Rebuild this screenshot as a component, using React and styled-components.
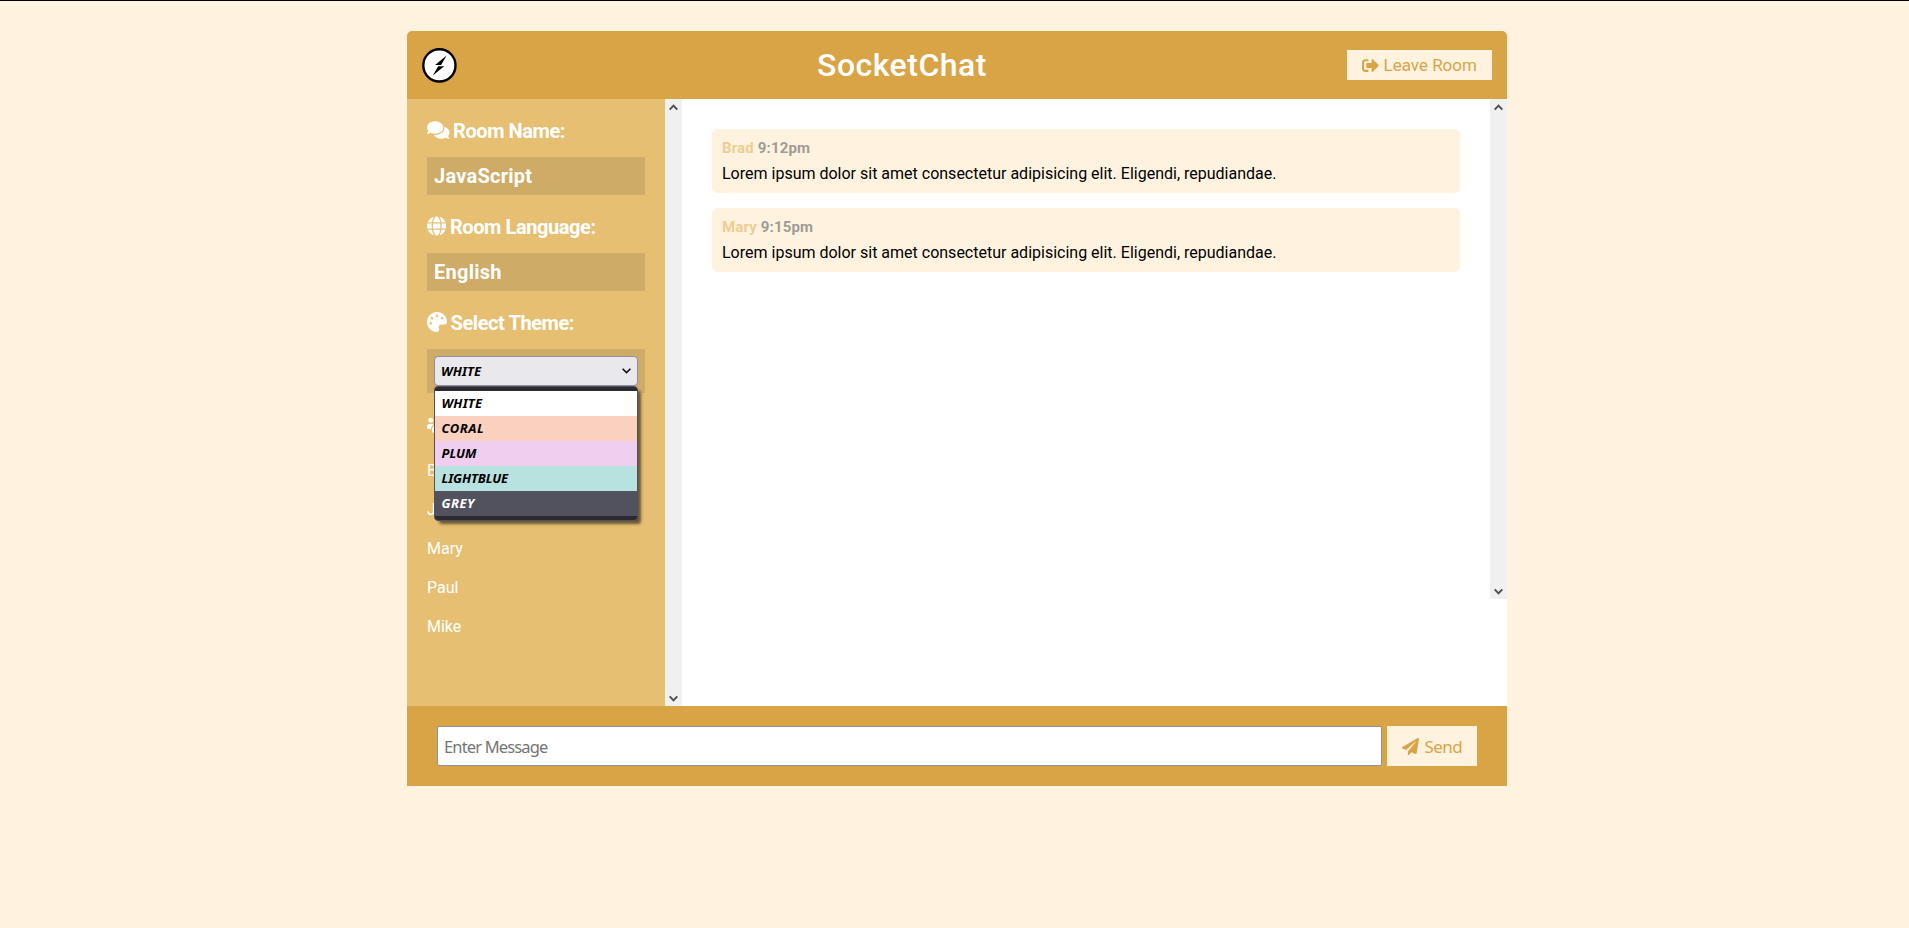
import React from "react";
import styled, { createGlobalStyle } from "styled-components";
import { FaComments, FaGlobe, FaPalette, FaUsers, FaSignOutAlt, FaPaperPlane } from "react-icons/fa";

const c = {
  dark: "#d9a446",
  light: "#e6bf72",
  cream: "#fff3e0",
};

const GlobalStyle = createGlobalStyle`
  *, *::before, *::after { box-sizing: border-box; }
  body {
    margin: 0;
    padding-left: 5px;
    min-height: 100vh;
    border-top: 1px solid #000;
    background: ${c.cream};
    font-family: Roboto, "Liberation Sans", sans-serif;
    font-size: 16px;
    color: #000;
  }
`;

const Container = styled.div`
  width: 1100px;
  margin: 30px auto 0;
`;

const Header = styled.header`
  display: flex;
  align-items: center;
  justify-content: space-between;
  height: 68px;
  padding: 0 15px;
  background: ${c.dark};
  border-radius: 5px 5px 0 0;
`;

const Logo = styled.svg`
  display: block;
  width: 35px;
  height: 35px;
`;

const Title = styled.h1`
  margin: 0;
  font-size: 32px;
  font-weight: 500;
  letter-spacing: 0.5px;
  line-height: 38px;
  color: #fff;
`;

const Button = styled.button`
  display: flex;
  align-items: center;
  gap: ${(p) => p.$gap || "4.5px"};
  width: ${(p) => p.$width};
  height: ${(p) => p.$height};
  flex: none;
  padding: 0 15px;
  border: 0;
  background: ${c.cream};
  color: ${c.dark};
  font-family: ${(p) => p.$font || "inherit"};
  font-size: 17px;
  letter-spacing: ${(p) => p.$spacing || "normal"};
  line-height: 20px;
  white-space: nowrap;

  svg { flex: none; }
`;

const Main = styled.main`
  display: grid;
  grid-template-columns: 275px 825px;
  height: 607px;
`;

const Sidebar = styled.aside`
  display: flex;
  background: ${c.light};
  color: #fff;
`;

const SidebarContent = styled.div`
  flex: 1;
  min-width: 0;
  padding: 20px 20px 60px;
`;

const Heading = styled.h3`
  display: flex;
  align-items: center;
  gap: 3.5px;
  height: 23.4px;
  margin: 0 0 15px;
  padding-top: 1px;
  font-size: 20px;
  font-weight: 700;
  letter-spacing: -0.42px;
  line-height: 22.4px;
  white-space: nowrap;

  svg {
    flex: none;
    width: ${(p) => p.$icon || "20px"};
    height: 20px;
    margin-bottom: 2.4px;
  }
`;

const Field = styled.div`
  margin-bottom: 20px;
  padding: 7px;
  background: rgba(0, 0, 0, 0.1);
`;

const TextField = styled(Field)`
  padding: 8px 7px 6px;
  font-size: 20px;
  font-weight: 700;
  letter-spacing: 0.25px;
  line-height: 23.4px;
`;

const SelectWrap = styled.div`
  position: relative;
  height: 30px;
  font: italic 700 13px/25px "Noto Sans", "DejaVu Sans", sans-serif;
  letter-spacing: 0.1px;
  color: #000;
`;

const SelectBox = styled.div`
  display: flex;
  align-items: center;
  justify-content: space-between;
  height: 30px;
  padding: 1px 6px 0;
  border: 1px solid #8f8f9d;
  border-radius: 4px;
  background: #e9e9ed;
`;

const Options = styled.ul`
  position: absolute;
  top: 30px;
  left: 0;
  right: 0;
  margin: 0;
  padding: 4px 0;
  list-style: none;
  border: 1px solid #52525e;
  border-radius: 4px;
  background: #2b2a33;
  box-shadow: 4px 4px 3px -1px rgba(0, 0, 0, 0.55);
`;

const Option = styled.li`
  height: 25px;
  padding: 0 6.5px;
  background: ${(p) => p.$bg};
  color: ${(p) => p.$color || "#000"};
  letter-spacing: ${(p) => p.$spacing || "0"};
`;

const Users = styled.ul`
  margin: 0;
  padding: 0;
  list-style: none;
`;

const User = styled.li`
  padding: 10px 0;
  line-height: 19px;
`;

const Track = styled.div`
  display: flex;
  flex-direction: column;
  justify-content: space-between;
  align-items: center;
  flex: none;
  width: 17px;
  height: ${(p) => p.$height || "100%"};
  padding: 5px 0 4px;
  background: #f0f0f0;
`;

const Chat = styled.section`
  display: flex;
  background: #fff;
`;

const Messages = styled.div`
  flex: 1;
  padding: 30px;
`;

const Message = styled.article`
  height: 64px;
  margin-bottom: 15px;
  padding: 10px;
  border-radius: 5px;
  background: ${c.cream};
`;

const Meta = styled.p`
  margin: 0 0 7px;
  font-size: 15px;
  font-weight: 700;
  letter-spacing: 0.15px;
  line-height: 18px;
  color: ${c.light};
  opacity: 0.7;

  span { color: #777; }
`;

const Body = styled.p`
  margin: 0;
  line-height: 19px;
`;

const Footer = styled.footer`
  display: flex;
  gap: 5px;
  height: 80px;
  padding: 20px 30px;
  background: ${c.dark};
`;

const Input = styled.input`
  flex: 1;
  min-width: 0;
  height: 40px;
  padding: 0 6px;
  border: 1px solid #8f8f9d;
  border-radius: 2px;
  outline: 0;
  background: #fff;
  font-family: "Noto Sans", "DejaVu Sans", sans-serif;
  font-size: 16.5px;
  letter-spacing: -0.85px;

  &::placeholder { color: #757575; opacity: 1; }
`;

const Label = styled.span`
  padding-top: ${(p) => p.$top || "0"};
`;

const Chevron = ({ up }) => (
  <svg width="9" height="7" viewBox="0 0 9 7" fill="none" stroke="#505050" strokeWidth="2">
    <path d={up ? "M0.7 5.6 4.5 1.6 8.3 5.6" : "M0.7 1.4 4.5 5.4 8.3 1.4"} />
  </svg>
);

const Scrollbar = ({ height }) => (
  <Track $height={height}>
    <Chevron up />
    <Chevron />
  </Track>
);

const themes = [
  { name: "WHITE", bg: "#fff", spacing: "0.2px" },
  { name: "CORAL", bg: "#fad0be", spacing: "0.5px" },
  { name: "PLUM", bg: "#f0ceef" },
  { name: "LIGHTBLUE", bg: "#b7e2e0", spacing: "-0.1px" },
  { name: "GREY", bg: "#52525e", color: "#fff", spacing: "0.5px" },
];

const users = ["Brad", "John", "Mary", "Paul", "Mike"];

const text = "Lorem ipsum dolor sit amet consectetur adipisicing elit. Eligendi, repudiandae.";
const messages = [
  { name: "Brad", time: "9:12pm" },
  { name: "Mary", time: "9:15pm" },
];

export default function App() {
  return (
    <>
      <GlobalStyle />
      <Container>
        <Header>
          <Logo viewBox="0 0 35 35">
            <circle cx="17.4" cy="17.4" r="16.1" fill="#fff" stroke="#000" strokeWidth="2.4" />
            <path d="M24.6 7.6 13.1 16.9H19.1ZM10.8 27.5 22.2 18.2H16.2Z" fill="#000" />
          </Logo>
          <Title>SocketChat</Title>
          <Button $width="145px" $height="30px">
            <FaSignOutAlt size={17} />
            Leave Room
          </Button>
        </Header>
        <Main>
          <Sidebar>
            <SidebarContent>
              <Heading $icon="22.5px">
                <FaComments />
                Room Name:
              </Heading>
              <TextField>JavaScript</TextField>
              <Heading $icon="19.4px">
                <FaGlobe />
                Room Language:
              </Heading>
              <TextField>English</TextField>
              <Heading>
                <FaPalette />
                Select Theme:
              </Heading>
              <Field>
                <SelectWrap>
                  <SelectBox>
                    WHITE
                    <svg width="9" height="6" viewBox="0 0 9 6" fill="none" stroke="#111" strokeWidth="1.6">
                      <path d="M0.6 0.8 4.5 4.6 8.4 0.8" />
                    </svg>
                  </SelectBox>
                  <Options>
                    {themes.map((t) => (
                      <Option key={t.name} $bg={t.bg} $color={t.color} $spacing={t.spacing}>{t.name}</Option>
                    ))}
                  </Options>
                </SelectWrap>
              </Field>
              <Heading $icon="25px">
                <FaUsers />
                Users
              </Heading>
              <Users>
                {users.map((u) => <User key={u}>{u}</User>)}
              </Users>
            </SidebarContent>
            <Scrollbar />
          </Sidebar>
          <Chat>
            <Messages>
              {messages.map((m) => (
                <Message key={m.name}>
                  <Meta>{m.name} <span>{m.time}</span></Meta>
                  <Body>{text}</Body>
                </Message>
              ))}
            </Messages>
            <Scrollbar height="500px" />
          </Chat>
        </Main>
        <Footer>
          <Input placeholder="Enter Message" />
          <Button $width="90px" $height="40px" $gap="5.5px" $font={'"Noto Sans", "DejaVu Sans", sans-serif'} $spacing="-0.6px">
            <FaPaperPlane size={17} />
            <Label $top="2px">Send</Label>
          </Button>
        </Footer>
      </Container>
    </>
  );
}
